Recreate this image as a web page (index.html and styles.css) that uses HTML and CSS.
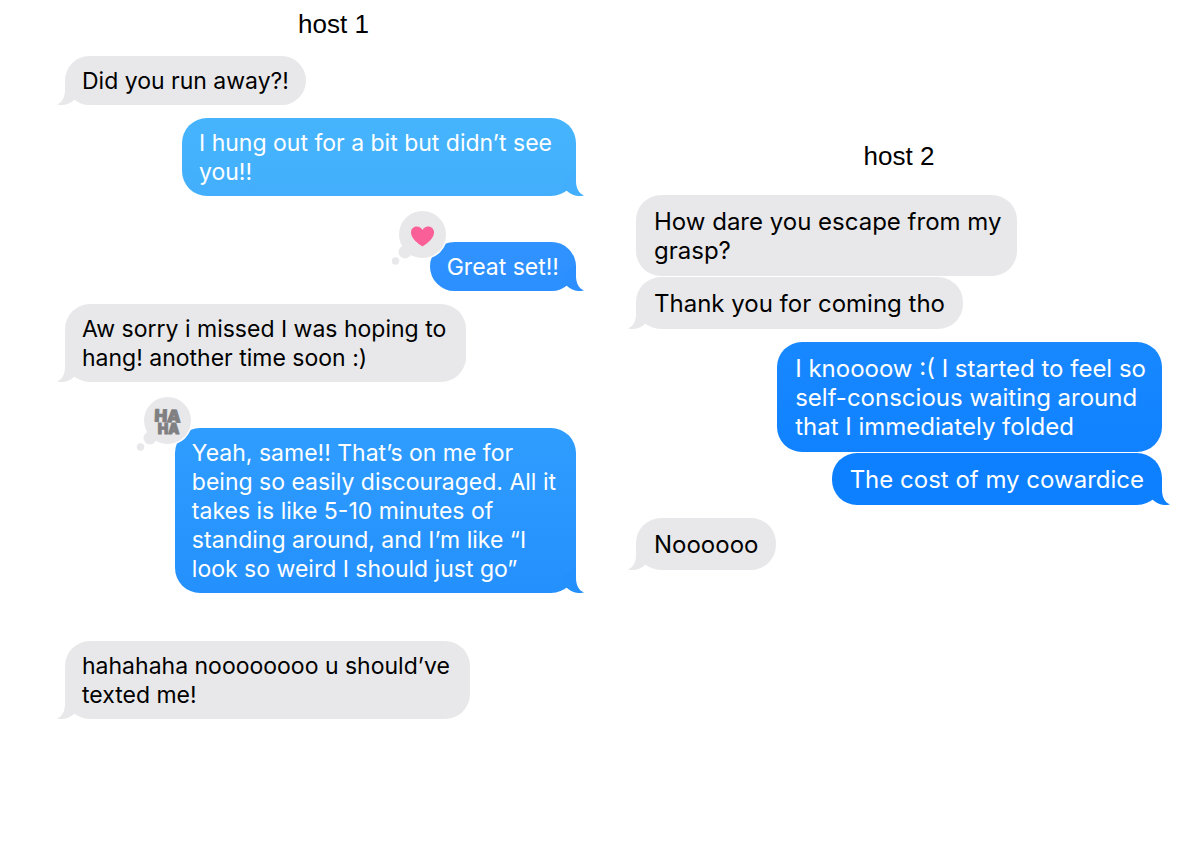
FILE: index.html
```html
<!DOCTYPE html>
<html lang="en">
<head>
<meta charset="utf-8">
<title>Messages</title>
<link rel="stylesheet" href="styles.css">
</head>
<body>
<svg class="defs" aria-hidden="true">
  <symbol id="tail" viewBox="0 0 34 26"><path d="M8 0V11C8 18 5 23.500 0 25.500C6 27 12 25.500 17 21L22 18L18 7Z"/></symbol>
  <symbol id="cloud" viewBox="0 0 60 60">
    <circle cx="33.500" cy="26.500" r="25" fill="#fff"/>
    <g fill="#e8e8ea"><circle cx="33.500" cy="26.500" r="23.500"/><circle cx="16" cy="44" r="6.500"/><circle cx="6.500" cy="53" r="3.700"/></g>
  </symbol>
</svg>
<main class="page">
  <section class="chat">
    <h2 class="title">host 1</h2>
    <p class="bubble received">Did you run away?!<svg class="tail"><use href="#tail"/></svg></p>
    <p class="bubble sent sky">I hung out for a bit but didn’t see<br>you!!<svg class="tail"><use href="#tail"/></svg></p>
    <p class="bubble sent azure reacted">Great set!!<svg class="tail"><use href="#tail"/></svg>
      <svg class="reaction" viewBox="0 0 60 60" role="img" aria-label="Loved"><use href="#cloud"/><path fill="#fb5f98" d="M33.500 38.500C29 35.500 22 30.500 22 24.500C22 21 24.500 18.500 27.800 18.500C30.300 18.500 32.400 19.800 33.500 22C34.600 19.800 36.700 18.500 39.200 18.500C42.500 18.500 45 21 45 24.500C45 30.500 38 35.500 33.500 38.500Z"/></svg>
    </p>
    <p class="bubble received wrapped">Aw sorry i missed I was hoping to<br>hang! another time soon :)<svg class="tail"><use href="#tail"/></svg></p>
    <p class="bubble sent ocean reacted wrapped">Yeah, same!! That’s on me for<br>being so easily discouraged. All it<br>takes is like 5-10 minutes of<br>standing around, and I’m like “I<br>look so weird I should just go”<svg class="tail"><use href="#tail"/></svg>
      <svg class="reaction" viewBox="0 0 60 60"><use href="#cloud"/><g class="haha"><text class="ha-large" x="33.500" y="28" transform="rotate(2 33.500 28)">HA</text><text class="ha-small" x="34.500" y="40">HA</text></g></svg>
    </p>
    <p class="bubble received spaced wrapped">hahahaha noooooooo u should’ve<br>texted me!<svg class="tail"><use href="#tail"/></svg></p>
  </section>
  <section class="chat second">
    <h2 class="title">host 2</h2>
    <p class="bubble received wrapped">How dare you escape from my<br>grasp?</p>
    <p class="bubble received follow">Thank you for coming tho<svg class="tail"><use href="#tail"/></svg></p>
    <p class="bubble sent royal wrapped">I knoooow :( I started to feel so<br>self-conscious waiting around<br>that I immediately folded</p>
    <p class="bubble sent deep follow">The cost of my cowardice<svg class="tail"><use href="#tail"/></svg></p>
    <p class="bubble received">Noooooo<svg class="tail"><use href="#tail"/></svg></p>
  </section>
</main>
</body>
</html>
```
FILE: styles.css
```css
body {
  margin: 0;
  background: #fff;
  color: #000;
  font-family: Inter, "Liberation Sans", sans-serif;
}

.defs {
  position: absolute;
  width: 0;
  height: 0;
}

.page {
  display: grid;
  grid-template-columns: 511fr 526fr;
  gap: 60px;
  padding: 9px 38px 0 65px;
}

.chat {
  display: flex;
  flex-direction: column;
  font-size: 23px;
  line-height: 29px;
}

.second {
  padding-top: 132px;
  font-size: 24px;
}

.title {
  margin: 0 0 17px;
  padding-left: 26px;
  font-family: "Liberation Sans", sans-serif;
  font-size: 26px;
  font-weight: 400;
  line-height: 30px;
  text-align: center;
}

.second .title {
  padding-left: 0;
  margin-bottom: 24px;
}

.bubble {
  --fill: #e8e8ea;
  position: relative;
  margin: 0 0 13px;
  padding: 11px 17px 9px;
  border-radius: 25px;
  background: var(--fill);
  white-space: nowrap;
}

.bubble.wrapped {
  padding-right: 20px;
}

.bubble.sky {
  padding-right: 24px;
}

.second .bubble {
  padding: 12px 18px 11px;
}

.second .bubble.wrapped {
  padding: 12px 16px 11px 18px;
}

.bubble.follow {
  margin-top: -12px;
}

.received {
  align-self: flex-start;
}

.sent {
  align-self: flex-end;
  color: #fff;
}

.reacted {
  margin-top: 33px;
}

.spaced {
  margin-top: 35px;
}

.sky {
  --fill: #43affc;
  background: linear-gradient(#46b4fd, var(--fill));
}

.azure {
  --fill: #2c8fff;
  background: linear-gradient(#3093ff, var(--fill));
}

.ocean {
  --fill: #2490fd;
  background: linear-gradient(#2f9dff, var(--fill));
}

.royal {
  --fill: #1082ff;
  background: linear-gradient(#1888ff, var(--fill));
}

.deep {
  --fill: #0d80ff;
}

.tail {
  position: absolute;
  bottom: 0;
  left: -8px;
  width: 34px;
  height: 26px;
  fill: var(--fill);
}

.sent .tail {
  right: -8px;
  left: auto;
  transform: scaleX(-1);
}

.reaction {
  position: absolute;
  top: -34px;
  left: -41px;
  width: 60px;
  height: 60px;
}

.haha {
  fill: #808083;
  stroke: #808083;
  stroke-width: 1px;
  stroke-linejoin: round;
  font-weight: 900;
  text-anchor: middle;
}

.ha-large {
  font-size: 17px;
}

.ha-small {
  font-size: 14px;
}
```
